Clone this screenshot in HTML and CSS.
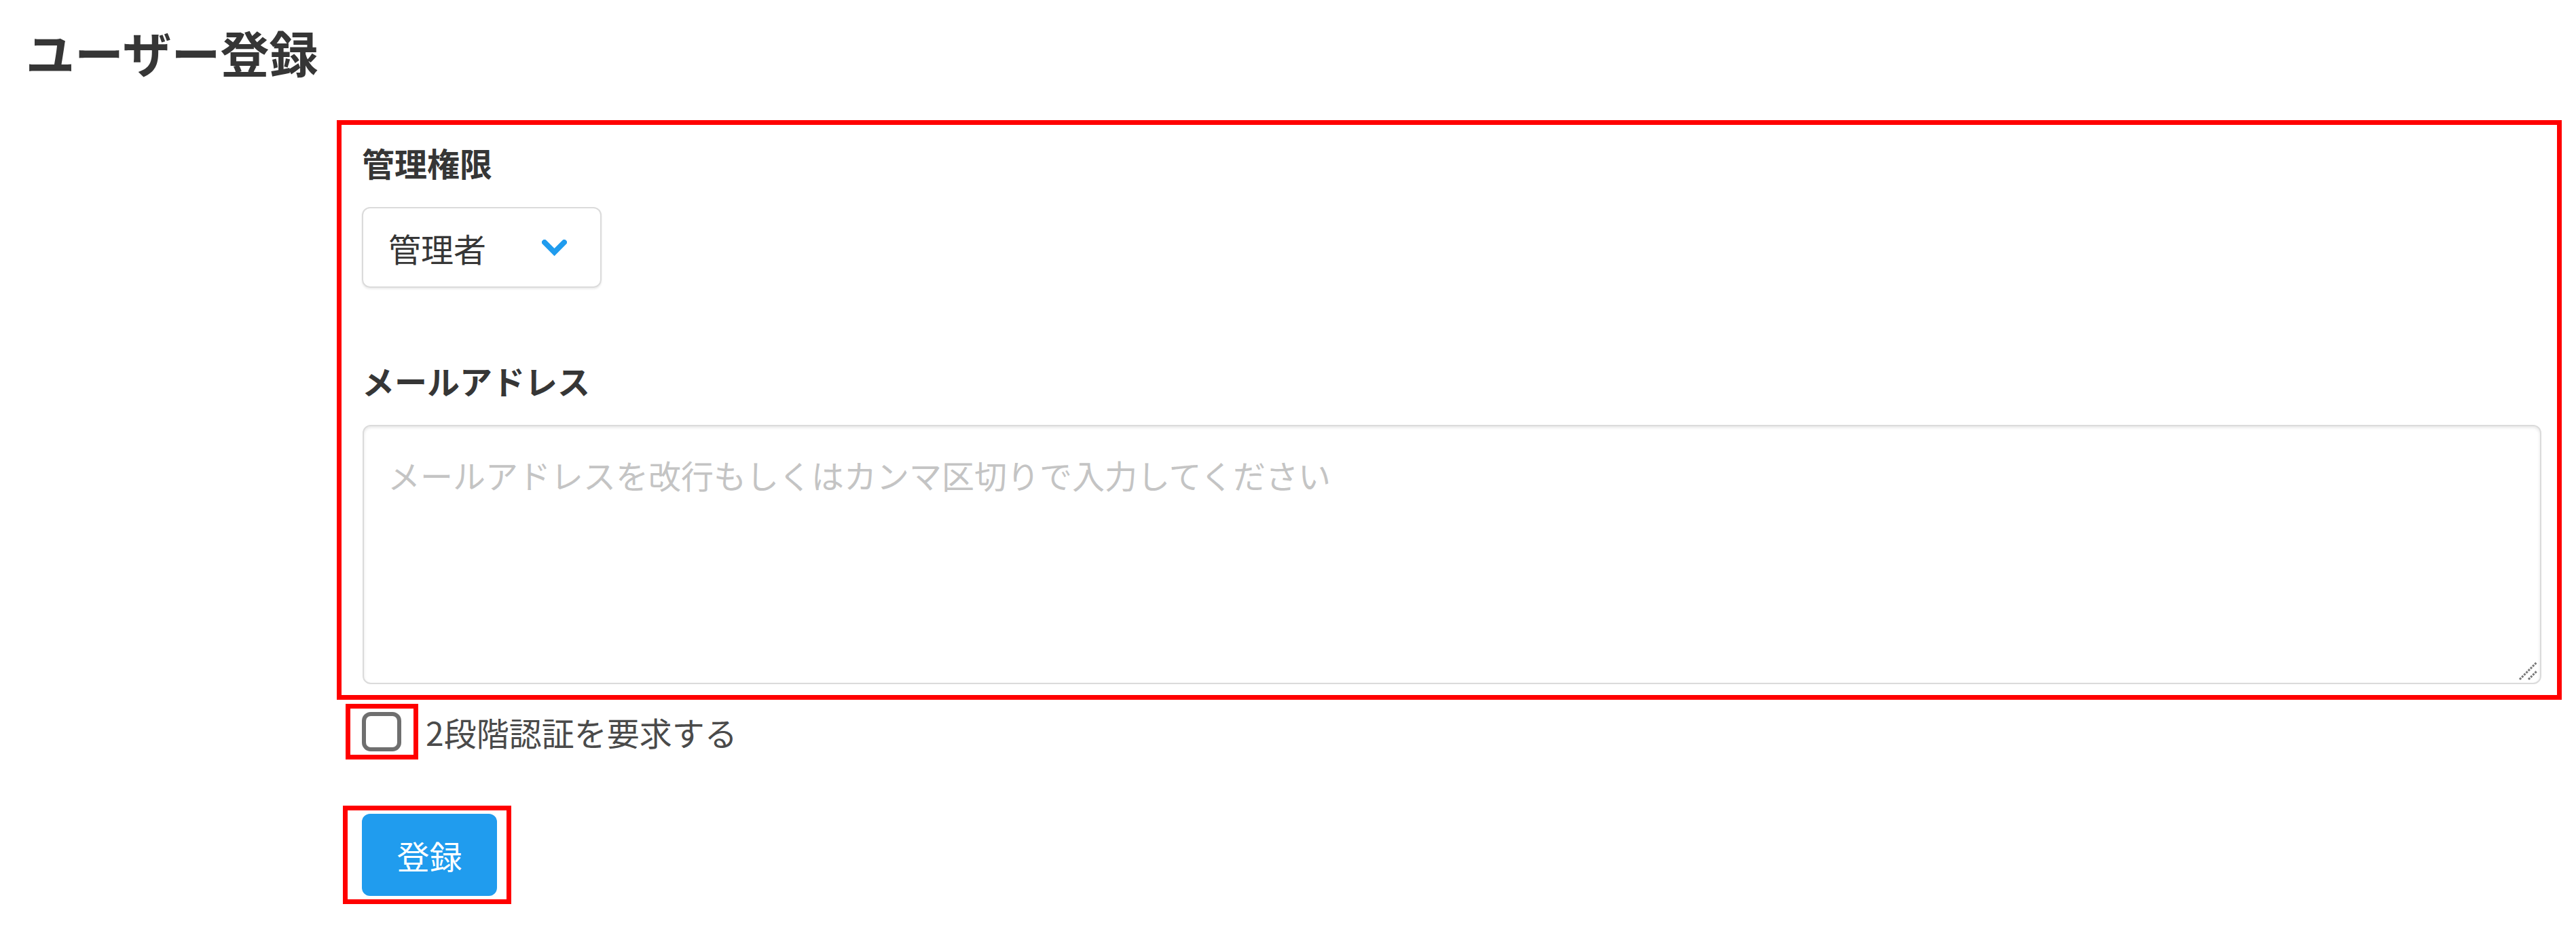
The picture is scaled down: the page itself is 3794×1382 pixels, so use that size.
FILE: index.html
```html
<!DOCTYPE html>
<html lang="ja">
<head>
    <meta charset="UTF-8">
    <meta name="viewport" content="width=device-width, initial-scale=1.0">
    <title>ユーザー登録</title>
    <link rel="stylesheet" href="styles.css">
</head>
<body>
    <div class="page">
        <h1 class="title">ユーザー登録</h1>

        <div class="mark form-box">
            <div class="field">
                <label class="label" for="role">管理権限</label>
                <div class="select" id="role">
                    <span>管理者</span>
                    <svg class="chevron" width="37" height="27" viewBox="0 0 37 27">
                        <polyline points="4,4 18.5,18.5 33,4" fill="none" stroke="#209cee" stroke-width="8" stroke-linecap="round"/>
                    </svg>
                </div>
            </div>
            <div class="field">
                <label class="label" for="emails">メールアドレス</label>
                <div class="textarea-wrap">
                    <textarea class="textarea" id="emails" placeholder="メールアドレスを改行もしくはカンマ区切りで入力してください"></textarea>
                    <!-- resize grip -->
                    <svg class="grip" width="30" height="30" viewBox="0 0 30 30">
                        <line x1="3" y1="27" x2="28" y2="2" stroke="#777" stroke-width="3" stroke-dasharray="3 1.5"/>
                        <line x1="16" y1="27" x2="28" y2="15" stroke="#777" stroke-width="3" stroke-dasharray="3 1.5"/>
                    </svg>
                </div>
            </div>
        </div>

        <div class="check-row">
            <span class="mark check-mark"><input type="checkbox" class="checkbox" id="twofa"></span>
            <label class="check-text" for="twofa">2段階認証を要求する</label>
        </div>

        <div class="mark button-mark">
            <button class="btn">登録</button>
        </div>
    </div>
</body>
</html>
```

FILE: styles.css
```css
html, body {
    margin: 0;
    padding: 0;
    background: #fff;
    font-family: "Noto Sans CJK JP", "Noto Sans", sans-serif;
    color: #4a4a4a;
}
.page {
    display: flex;
    flex-direction: column;
    align-items: flex-start;
}
.title {
    margin: 22px 0 0 38px;
    font-size: 72px;
    line-height: 108px;
    font-weight: 700;
    color: #363636;
}

/* red annotation frames */
.mark {
    border: 7px solid #ff0000;
    box-sizing: border-box;
}
.form-box {
    margin: 47px 0 0 496px;
    width: 3277px;
    padding: 19px 23px 16px 30px;
}
.field + .field {
    margin-top: 100px;
}
.label {
    display: block;
    font-size: 48px;
    line-height: 72px;
    font-weight: 700;
    color: #363636;
    margin-bottom: 30px;
}
.select {
    display: flex;
    align-items: center;
    box-sizing: border-box;
    width: 353px;
    height: 119px;
    padding: 0 49px 0 37px;
    border: 2px solid #dbdbdb;
    border-radius: 12px;
    box-shadow: 0 2px 3px rgba(10,10,10,0.08);
    font-size: 48px;
    color: #363636;
}
.chevron {
    margin-left: auto;
    margin-top: 4px;
}
.textarea-wrap {
    position: relative;
    margin-left: 1px;
}
.textarea {
    display: block;
    box-sizing: border-box;
    width: 3209px;
    height: 382px;
    padding: 35px;
    border: 2px solid #dbdbdb;
    border-radius: 12px;
    box-shadow: inset 0 2px 4px rgba(10,10,10,0.1);
    font-family: inherit;
    font-size: 48px;
    line-height: 72px;
    color: #363636;
    resize: none;
    outline: none;
}
.textarea::placeholder {
    color: #c4c4c4;
}
.grip {
    position: absolute;
    right: 5px;
    bottom: 4px;
}

.check-row {
    display: flex;
    align-items: center;
    margin: 6px 0 0 509px;
}
.check-mark {
    display: block;
    padding: 5px 18px 5px 17px;
}
.checkbox {
    appearance: none;
    display: block;
    margin: 0;
    width: 58px;
    height: 58px;
    box-sizing: border-box;
    border: 6px solid #6f6f6f;
    border-radius: 13px;
    background: #fff;
}
.check-text {
    margin-left: 11px;
    font-size: 48px;
    line-height: 72px;
    color: #4a4a4a;
}

.button-mark {
    margin: 68px 0 0 505px;
    padding: 5px 14px 5px 21px;
}
.btn {
    display: block;
    width: 199px;
    height: 121px;
    border: none;
    border-radius: 12px;
    background: #209cee;
    color: #fff;
    font-family: inherit;
    font-size: 48px;
    cursor: pointer;
}
```
